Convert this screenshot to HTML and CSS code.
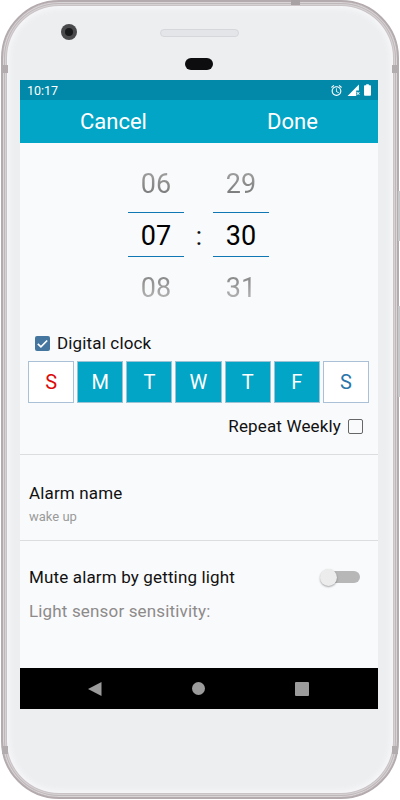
FILE: index.html
```html
<!DOCTYPE html>
<html lang="en">
<head>
    <meta charset="UTF-8">
    <meta name="viewport" content="width=device-width, initial-scale=1.0">
    <title>Alarm</title>
    <link rel="stylesheet" href="styles.css">
</head>
<body>
    <div class="phone">
        <span class="side-key key-top"></span>
        <span class="side-key key-bottom"></span>
        <span class="band band-left-top"></span>
        <span class="band band-right-top"></span>
        <span class="band band-left-bottom"></span>
        <span class="band band-right-bottom"></span>
        <span class="band-top"></span>

        <div class="camera"><span class="lens"></span></div>
        <div class="speaker"></div>
        <div class="sensor"></div>

        <div class="screen">
            <div class="status-bar">
                <span class="clock">10:17</span>
                <div class="status-icons">
                    <svg class="icon-alarm" viewBox="0 0 24 24"><path d="M22 5.72l-4.6-3.86-1.29 1.53 4.6 3.86L22 5.72zM7.88 3.39L6.6 1.86 2 5.71l1.29 1.53 4.59-3.85zM12.5 8H11v6l4.75 2.85.75-1.23-4-2.37V8zM12 4c-4.97 0-9 4.03-9 9s4.02 9 9 9c4.97 0 9-4.03 9-9s-4.03-9-9-9zm0 16c-3.87 0-7-3.13-7-7s3.13-7 7-7 7 3.13 7 7-3.13 7-7 7z"/></svg>
                    <svg class="icon-signal" viewBox="0 0 24 24"><path d="M1 22L22 1v11h-5v10z"/><path d="M17.5 15.6l1.1-1.1 1.9 1.9 1.9-1.9 1.1 1.1-1.9 1.9 1.9 1.9-1.1 1.1-1.9-1.9-1.9 1.9-1.1-1.1 1.9-1.9z"/></svg>
                    <svg class="icon-battery" viewBox="0 0 8 13"><path d="M2.5 0h3v1.2H7a1 1 0 0 1 1 1V12a1 1 0 0 1-1 1H1a1 1 0 0 1-1-1V2.200a1 1 0 0 1 1-1h1.500z"/></svg>
                </div>
            </div>

            <div class="app-bar">
                <span class="bar-btn">Cancel</span>
                <span class="bar-btn">Done</span>
            </div>

            <div class="content">
                <div class="picker">
                    <div class="wheel">
                        <div class="num num-prev"><span>06</span></div>
                        <div class="num num-current">07</div>
                        <div class="num num-next"><span>08</span></div>
                    </div>
                    <div class="colon">:</div>
                    <div class="wheel">
                        <div class="num num-prev"><span>29</span></div>
                        <div class="num num-current">30</div>
                        <div class="num num-next"><span>31</span></div>
                    </div>
                </div>

                <div class="digital-row">
                    <span class="check checked">
                        <svg viewBox="0 0 16 16"><path d="M3 8.300l3.300 3.200L13 4.800" fill="none" stroke="#fff" stroke-width="1.800"/></svg>
                    </span>
                    <span>Digital clock</span>
                </div>

                <div class="days">
                    <div class="day sunday">S</div>
                    <div class="day on">M</div>
                    <div class="day on">T</div>
                    <div class="day on">W</div>
                    <div class="day on">T</div>
                    <div class="day on">F</div>
                    <div class="day saturday">S</div>
                </div>

                <div class="repeat-row">
                    <span>Repeat Weekly</span>
                    <span class="check"></span>
                </div>

                <div class="section name-section">
                    <div class="label">Alarm name</div>
                    <div class="hint">wake up</div>
                </div>

                <div class="section light-section">
                    <div class="switch-row">
                        <span class="label">Mute alarm by getting light</span>
                        <span class="switch"><span class="thumb"></span></span>
                    </div>
                    <div class="label-muted">Light sensor sensitivity:</div>
                </div>
            </div>

            <div class="nav-bar">
                <svg class="nav-icon" viewBox="0 0 14 14"><path d="M13.500 0v14L0 7z"/></svg>
                <span class="nav-home"></span>
                <span class="nav-recent"></span>
            </div>
        </div>
    </div>
</body>
</html>
```

FILE: styles.css
```css
* {
    box-sizing: border-box;
}

body {
    margin: 0;
    background: #fff;
    font-family: Roboto, "Liberation Sans", sans-serif;
    color: #111;
}

.phone {
    position: relative;
    width: 398px;
    height: 799px;
    margin-left: 1px;
    padding: 78px 18px 0 17px;
    border: 2px solid #b4abaf;
    border-radius: 58px;
    background: #eceef0;
    box-shadow: inset 0 0 0 1px #d9d4d6, inset 0 0 0 2px #bfb8bb, inset 0 0 0 3px #d6d1d3, inset 0 0 0 4px #c9c3c6, inset 0 0 5px 7px #f6f6f8;
}

/* hardware bits around the screen */
.side-key {
    position: absolute;
    right: -3px;
    width: 2px;
    background: #c6c8ca;
}

.key-top {
    top: 189px;
    height: 50px;
}

.key-bottom {
    top: 304px;
    height: 91px;
}

.band {
    position: absolute;
    width: 6px;
    height: 8px;
    background: #b3acaf;
}

.band-left-top {
    top: 63px;
    left: -1px;
}

.band-right-top {
    top: 63px;
    right: -1px;
}

.band-left-bottom {
    top: 744px;
    left: -1px;
}

.band-right-bottom {
    top: 744px;
    right: -1px;
}

.band-top {
    position: absolute;
    top: -2px;
    left: 288px;
    width: 9px;
    height: 5px;
    background: #a9a2a5;
}

.camera {
    position: absolute;
    top: 22px;
    left: 58px;
    display: flex;
    align-items: center;
    justify-content: center;
    width: 16px;
    height: 16px;
    border-radius: 50%;
    background: #4a4a4d;
}

.lens {
    width: 8px;
    height: 8px;
    border-radius: 50%;
    background: #17191a;
}

.speaker {
    position: absolute;
    top: 27px;
    left: 157px;
    width: 79px;
    height: 8px;
    border: 1px solid #d5d7da;
    border-radius: 4px;
    background: #e3e5e8;
}

.sensor {
    position: absolute;
    top: 56px;
    left: 182px;
    width: 28px;
    height: 12px;
    border-radius: 6px;
    background: #0d0d0f;
}

.screen {
    display: flex;
    flex-direction: column;
    width: 358px;
    height: 629px;
}

.status-bar {
    display: flex;
    align-items: center;
    justify-content: space-between;
    height: 20px;
    padding: 0 7px;
    background: #0288a8;
    color: #fff;
}

.clock {
    font-size: 12.500px;
}

.status-icons {
    display: flex;
    align-items: center;
    gap: 4px;
}

.status-icons svg {
    display: block;
    fill: #fff;
}

.icon-alarm,
.icon-signal {
    width: 13px;
    height: 13px;
}

.icon-battery {
    width: 7px;
    height: 12px;
}

.app-bar {
    display: flex;
    align-items: center;
    height: 43px;
    padding-left: 60px;
    background: #03a5c6;
    color: #fff;
    font-size: 22px;
}

.bar-btn:first-child {
    width: 187px;
}

.content {
    flex: 1;
    background: #f9fafc;
}

.picker {
    display: flex;
    align-items: center;
    height: 163px;
    margin-top: 11px;
    padding-left: 108px;
}

.wheel {
    width: 56px;
    text-align: center;
    font-size: 27px;
}

.colon {
    width: 29px;
    padding-left: 1px;
    text-align: center;
    font-size: 26px;
}

.num {
    display: flex;
    align-items: center;
    justify-content: center;
    padding-top: 2px;
}

.num span {
    background-clip: text;
    -webkit-background-clip: text;
    color: transparent;
}

.num-prev {
    height: 58px;
}

.num-prev span {
    background-image: linear-gradient(#a5a5a5, #727272);
}

.num-current {
    height: 45px;
    border-top: 1px solid #0f78b4;
    border-bottom: 1px solid #0f78b4;
    color: #000;
}

.num-next {
    height: 60px;
}

.num-next span {
    background-image: linear-gradient(#808080, #bdbdbd);
}

.digital-row {
    display: flex;
    align-items: center;
    gap: 7px;
    height: 24px;
    margin: 14px 0 0 15px;
    font-size: 17px;
    letter-spacing: 0.15px;
}

.check {
    display: block;
    width: 15px;
    height: 15px;
    border: 1.500px solid #666;
    border-radius: 2px;
}

.check.checked {
    border: none;
    background: #44769f;
}

.check svg {
    display: block;
    width: 15px;
    height: 15px;
}

.days {
    display: grid;
    grid-template-columns: repeat(7, 1fr);
    gap: 3px;
    height: 42px;
    margin: 6px 9px 0 8px;
}

.day {
    display: flex;
    align-items: center;
    justify-content: center;
    border: 1px solid #a9c0d6;
    background: #fff;
    font-size: 20px;
}

.day.on {
    border-color: #9cc2d4;
    background: #03a5c6;
    color: #fff;
}

.sunday {
    color: #dd0a0a;
}

.saturday {
    color: #2a76ab;
}

.repeat-row {
    display: flex;
    align-items: center;
    justify-content: flex-end;
    gap: 7px;
    height: 24px;
    margin-top: 11px;
    padding-right: 15px;
    font-size: 17px;
    letter-spacing: 0.15px;
}

.section {
    border-top: 1px solid #dcdde0;
    padding: 0 18px 0 9px;
}

.name-section {
    height: 86px;
    margin-top: 16px;
    padding-top: 27px;
}

.label {
    font-size: 17px;
    line-height: 22px;
    letter-spacing: 0.15px;
}

.hint {
    margin-top: 6px;
    color: #9a9a9a;
    font-size: 13px;
    line-height: 14px;
}

.light-section {
    padding-top: 25px;
}

.switch-row {
    display: flex;
    align-items: center;
    justify-content: space-between;
}

.switch {
    position: relative;
    display: block;
    width: 38px;
    height: 12px;
    border-radius: 6px;
    background: #b7b7b7;
}

/* sits over the track */
.thumb {
    position: absolute;
    top: -2.500px;
    left: -2px;
    width: 17px;
    height: 17px;
    border-radius: 50%;
    background: #ececec;
    box-shadow: 0 1px 2px rgba(0, 0, 0, 0.35);
}

.label-muted {
    margin-top: 12px;
    color: #8d8a8a;
    font-size: 17px;
    line-height: 22px;
    letter-spacing: 0.16px;
}

.nav-bar {
    display: flex;
    align-items: center;
    height: 41px;
    padding-left: 68px;
    background: #000;
}

.nav-icon {
    display: block;
    width: 14px;
    height: 14px;
    fill: #9b9b9b;
}

.nav-home {
    width: 13px;
    height: 13px;
    margin-left: 90px;
    border-radius: 50%;
    background: #9b9b9b;
}

.nav-recent {
    width: 14px;
    height: 14px;
    margin-left: 90px;
    border-radius: 1px;
    background: #9b9b9b;
}
```
